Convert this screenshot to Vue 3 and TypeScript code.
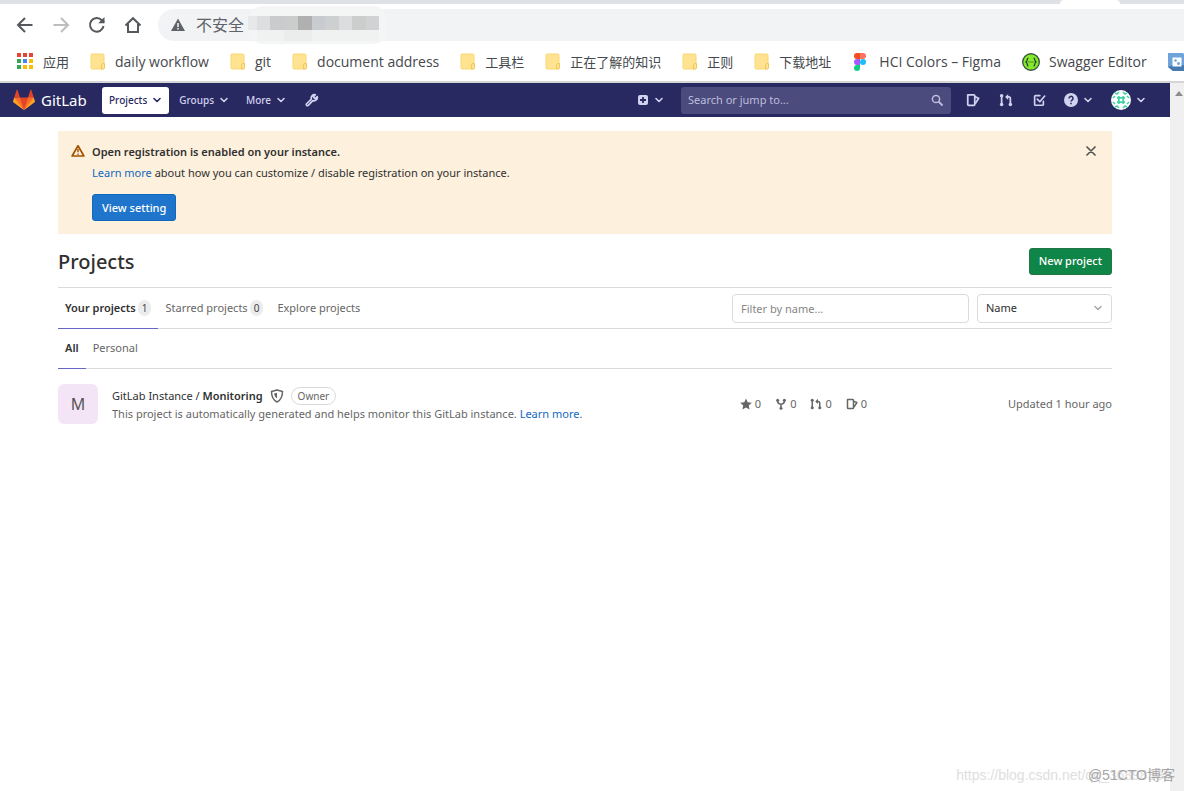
<script setup lang="ts">
import { ref } from 'vue'

interface Bookmark { label: string; icon: 'apps' | 'folder' | 'figma' | 'swagger' | 'tool'; cjk?: boolean }
interface Shade { x: number; w: number; fill: string }

const bookmarks: Bookmark[] = [
  { label: '应用', icon: 'apps', cjk: true },
  { label: 'daily workflow', icon: 'folder' },
  { label: 'git', icon: 'folder' },
  { label: 'document address', icon: 'folder' },
  { label: '工具栏', icon: 'folder', cjk: true },
  { label: '正在了解的知识', icon: 'folder', cjk: true },
  { label: '正则', icon: 'folder', cjk: true },
  { label: '下载地址', icon: 'folder', cjk: true },
  { label: 'HCI Colors – Figma', icon: 'figma' },
  { label: 'Swagger Editor', icon: 'swagger' },
  { label: '', icon: 'tool' },
]

const shades: Shade[] = [
  { x: 0, w: 9, fill: '#e6e8ea' }, { x: 9, w: 13, fill: '#dcdee0' },
  { x: 22, w: 14, fill: '#c9cbcd' }, { x: 36, w: 14, fill: '#cbcdcd' },
  { x: 50, w: 14, fill: '#b0b0b0' }, { x: 64, w: 13, fill: '#c8ccd1' },
  { x: 77, w: 14, fill: '#cdcfd1' }, { x: 91, w: 13, fill: '#dbdddf' },
  { x: 104, w: 14, fill: '#cccece' }, { x: 118, w: 13, fill: '#d0d2d4' },
]

const appColors = ['#ea4335', '#ea4335', '#ea4335', '#34a853', '#4285f4', '#fbbc05', '#34a853', '#fbbc05', '#fbbc05']
const filter = ref('')
const sort = ref('Name')
const showAlert = ref(true)
</script>

<template>
  <div class="window">
    <svg class="defs" aria-hidden="true">
      <symbol id="chev" viewBox="0 0 8 8"><path d="M1 2.500 4 5.500 7 2.500" fill="none" stroke="currentColor" stroke-width="1.600" stroke-linecap="round" stroke-linejoin="round" /></symbol>
      <symbol id="issues" viewBox="0 0 16 16"><g fill="none" stroke="currentColor" stroke-width="2" stroke-linejoin="round"><path d="M2 2h7a1 1 0 0 1 1 1v10a1 1 0 0 1-1 1H3a1 1 0 0 1-1-1z" /><path d="M10.500 4.500 14.500 6 11 11.500" stroke-linecap="round" /></g></symbol>
      <symbol id="merge" viewBox="0 0 16 16"><g fill="none" stroke="currentColor" stroke-width="2"><path d="M3 3v10M8.500 4.500h2.500a2 2 0 0 1 2 2V13" /></g><g fill="currentColor"><circle cx="3" cy="3" r="2" /><circle cx="3" cy="13" r="2" /><circle cx="13" cy="13" r="2" /><path d="M10.500 1v7L7 4.500z" /></g></symbol>
      <symbol id="fork" viewBox="0 0 16 16"><path d="M3.500 3v1.500c0 2 1.500 3 4.500 4 3-1 4.500-2 4.500-4V3M8 8.500V13" fill="none" stroke="currentColor" stroke-width="2" /><g fill="currentColor"><circle cx="3.500" cy="3" r="2" /><circle cx="12.500" cy="3" r="2" /><circle cx="8" cy="13.500" r="2" /></g></symbol>
    </svg>

    <div class="tabstrip"><span class="active-tab"></span></div>

    <div class="toolbar">
      <button class="nav-btn" aria-label="Back"><svg viewBox="0 0 18 18"><path d="M16.500 9H2.500M9 2 2 9l7 7" /></svg></button>
      <button class="nav-btn faded" aria-label="Forward"><svg viewBox="0 0 18 18"><path d="M1.500 9h14M9 2l7 7-7 7" /></svg></button>
      <button class="nav-btn" aria-label="Reload"><svg viewBox="0 0 18 18"><path d="M15.500 10A6.800 6.800 0 1 1 13.800 4.200L16 6.500" /><path d="M16.500 1v6.300h-6.300z" class="solid" /></svg></button>
      <button class="nav-btn" aria-label="Home"><svg viewBox="0 0 18 18"><path d="M1.500 9.500 9 2.200l7.500 7.300M4 8v8h10V8" /></svg></button>
      <div class="omnibox">
        <svg class="warn" viewBox="0 0 14 14"><path d="M7 0.500 14 13H0z" fill="#5f6368" /><path d="M7 5v4M7 10v1.600" stroke="#fff" stroke-width="1.400" /></svg>
        <span>不安全</span>
        <svg class="mosaic" viewBox="0 0 150 38">
          <rect x="2" y="0" width="136" height="38" rx="12" fill="#f4f5f5" />
          <rect v-for="s in shades" :key="s.x" :x="s.x" y="10" :width="s.w" height="14" :fill="s.fill" />
          <rect x="9" y="24" width="122" height="11" fill="#f0f1f1" />
          <rect x="36" y="24" width="28" height="11" fill="#ebecec" />
        </svg>
      </div>
    </div>

    <nav class="bookmarks" aria-label="Bookmarks">
      <a v-for="(b, i) in bookmarks" :key="i" href="#" :class="['bookmark', b.icon, { cjk: b.cjk }]" :aria-label="b.label || 'Bookmark'">
        <svg v-if="b.icon === 'apps'" viewBox="0 0 16 18"><rect v-for="(c, n) in appColors" :key="n" :x="(n % 3) * 6" :y="Math.floor(n / 3) * 6" width="4" height="4" :fill="c" /></svg>
        <svg v-else-if="b.icon === 'folder'" viewBox="0 0 16 18"><rect x="1" y="1" width="13" height="15" rx="1" fill="#ffe391" stroke="#f8d775" /><path d="M11.500 16v-4l1-1.500h2V15l-1 1z" fill="#ffe391" stroke="#efc75a" /></svg>
        <svg v-else-if="b.icon === 'figma'" viewBox="0 0 12 18"><path d="M3 0h3v6H3a3 3 0 0 1 0-6z" fill="#f24e1e" /><path d="M6 0h3a3 3 0 0 1 0 6H6z" fill="#ff7262" /><path d="M3 6h3v6H3a3 3 0 0 1 0-6z" fill="#a259ff" /><circle cx="9" cy="9" r="3" fill="#1abcfe" /><path d="M3 12h3v3a3 3 0 1 1-3-3z" fill="#0acf83" /></svg>
        <svg v-else-if="b.icon === 'swagger'" viewBox="0 0 18 18"><circle cx="9" cy="9" r="8.300" fill="#85ea2d" stroke="#3c5a3c" stroke-width="1.400" /><path d="M6.500 5C4.500 5 6 8 4 9 6 10 4.500 13 6.500 13M11.500 5C13.500 5 12 8 14 9 12 10 13.500 13 11.500 13" fill="none" stroke="#243b2c" stroke-width="1.200" /><path d="M6.500 9h1M8.500 9h1M10.500 9h1" stroke="#243b2c" stroke-width="1.200" /></svg>
        <svg v-else viewBox="0 0 18 18"><path d="M0 0h15l3 3v15H5l-5-4z" fill="#6fa4db" /><path d="M0 14 5 12h13v6H5z" fill="#457bb0" /><rect x="4.500" y="4.500" width="9" height="9" fill="#fff" /><circle cx="7.500" cy="7.500" r="1.300" fill="#6fa4db" /><circle cx="10.500" cy="10.500" r="1.500" fill="#6fa4db" /></svg>
        <span v-if="b.label">{{ b.label }}</span>
      </a>
    </nav>

    <div class="viewport">
      <div class="page">
        <header class="navbar">
          <a href="#" class="brand">
            <svg viewBox="0 0 36 36"><path fill="#e24329" d="M2 14l9.380 9v-9l-4-12.280c-.205-.632-1.176-.632-1.380 0zM34 14l-9.380 9v-9l4-12.280c.205-.632 1.176-.632 1.380 0zM18 34.380 3 14h30z" /><path fill="#fc6d26" d="M18 34.380 11.380 14H2l4 11zM18 34.380 24.620 14H34l-4 11z" /><path fill="#fca326" d="M2 14 .1 20.160c-.18.565 0 1.200.5 1.560l17.420 12.660zM34 14l1.900 6.160c.18.565 0 1.200-.5 1.560L18 34.380z" /></svg>
            <span>GitLab</span>
          </a>
          <button class="menu current">Projects <svg class="chev"><use href="#chev" /></svg></button>
          <button class="menu">Groups <svg class="chev"><use href="#chev" /></svg></button>
          <button class="menu">More <svg class="chev"><use href="#chev" /></svg></button>
          <a href="#" class="wrench" aria-label="Admin Area"><svg viewBox="0 0 16 16"><path d="M14 4.200 11.600 6.500 9.500 4.400 11.800 2A3.800 3.800 0 0 0 7.300 7L1.800 12.300a1.350 1.350 0 0 0 1.900 1.900L9 8.700A3.800 3.800 0 0 0 14 4.200z" fill="none" stroke="currentColor" stroke-width="1.900" stroke-linejoin="round" /></svg></a>
          <div class="right">
            <button class="icon-menu plus" aria-label="New"><svg class="i12" viewBox="0 0 12 12"><rect x="1" y="1" width="10" height="10" rx="2" fill="currentColor" /><path d="M6 3v6M3 6h6" stroke="#292961" stroke-width="1.800" /></svg><svg class="chev"><use href="#chev" /></svg></button>
            <label class="search"><input type="text" placeholder="Search or jump to..." aria-label="Search or jump to" /><svg class="i12" viewBox="0 0 12 12"><circle cx="5" cy="5" r="3.600" fill="none" stroke="currentColor" stroke-width="1.500" /><path d="m8 8 3 3" stroke="currentColor" stroke-width="1.800" stroke-linecap="round" /></svg></label>
            <a href="#" class="tool" aria-label="Issues"><svg class="i14"><use href="#issues" /></svg></a>
            <a href="#" class="tool" aria-label="Merge requests"><svg class="i14"><use href="#merge" /></svg></a>
            <a href="#" class="tool" aria-label="To-Do List"><svg class="i14" viewBox="0 0 16 16"><path d="M9 3H4a1 1 0 0 0-1 1v9a1 1 0 0 0 1 1h8a1 1 0 0 0 1-1V9.500M6 7l3 3 5.500-6.500" fill="none" stroke="currentColor" stroke-width="1.900" stroke-linecap="round" stroke-linejoin="round" /></svg></a>
            <button class="icon-menu help" aria-label="Help"><svg class="i14" viewBox="0 0 14 14"><circle cx="7" cy="7" r="7" fill="currentColor" /><path d="M5 5.400a2 2 0 1 1 3 1.700c-.7.400-1 .7-1 1.500M7 9.800v1.400" fill="none" stroke="#292961" stroke-width="1.500" /></svg><svg class="chev"><use href="#chev" /></svg></button>
            <button class="icon-menu" aria-label="Account"><svg class="avatar" viewBox="0 0 20 20"><circle cx="10" cy="10" r="10" fill="#fff" /><g fill="none" stroke="#3fd6a1"><path stroke-width="1.800" d="M7.800 6v8M12.200 6v8M6 7.800h8M6 12.200h8" /><path stroke-width="1.600" d="M8 2 6 4 4 3M12 2l2 2 2-1M8 18l-2-2-2 1M12 18l2-2 2 1M2 8l2-2M2 12l2 2M18 8l-2-2M18 12l-2 2" /></g></svg><svg class="chev"><use href="#chev" /></svg></button>
          </div>
        </header>

        <main>
          <section v-if="showAlert" class="alert">
            <svg class="i14" viewBox="0 0 14 14"><path d="M7 1.800 12.900 12H1.100z" fill="none" stroke="#a35200" stroke-width="1.700" stroke-linejoin="round" /><path d="M7 5v3.300M7 9.400v1.400" stroke="#a35200" stroke-width="1.500" /></svg>
            <div class="alert-body">
              <h4>Open registration is enabled on your instance.</h4>
              <p><a href="#">Learn more</a> about how you can customize / disable registration on your instance.</p>
              <button class="btn blue">View setting</button>
            </div>
            <button class="close" aria-label="Dismiss" @click="showAlert = false"><svg viewBox="0 0 10 10"><path d="m1 1 8 8M9 1 1 9" stroke="currentColor" stroke-width="1.700" stroke-linecap="round" /></svg></button>
          </section>

          <div class="title-row"><h1>Projects</h1><button class="btn green">New project</button></div>

          <div class="tabs">
            <a href="#" class="tab active">Your projects <span class="badge">1</span></a>
            <a href="#" class="tab">Starred projects <span class="badge">0</span></a>
            <a href="#" class="tab">Explore projects</a>
            <div class="filters">
              <input v-model="filter" type="text" placeholder="Filter by name..." aria-label="Filter by name" />
              <div class="select-wrap"><select v-model="sort" aria-label="Sort by"><option>Name</option></select><svg class="chev"><use href="#chev" /></svg></div>
            </div>
          </div>
          <div class="tabs sub">
            <a href="#" class="tab active">All</a>
            <a href="#" class="tab">Personal</a>
          </div>

          <article class="project">
            <div class="letter">M</div>
            <div class="info">
              <div class="name-row">
                <a href="#" class="name">GitLab Instance / <b>Monitoring</b></a>
                <svg class="i14" viewBox="0 0 14 14"><path d="M7 1 12.500 2.500C12.500 8 11 11 7 13 3 11 1.500 8 1.500 2.500z" fill="none" stroke="currentColor" stroke-width="1.500" stroke-linejoin="round" /><path d="M7 3.800v5.600C5 8 4.300 6.500 4.200 4.500z" fill="currentColor" /></svg>
                <span class="role">Owner</span>
              </div>
              <p>This project is automatically generated and helps monitor this GitLab instance. <a href="#">Learn more</a>.</p>
            </div>
            <div class="stats">
              <a href="#"><svg class="i12" viewBox="0 0 14 14"><path d="M7 .5 9 5l4.800.5-3.600 3.200 1 4.800L7 11l-4.200 2.500 1-4.800L.2 5.500 5 5z" fill="currentColor" /></svg>0</a>
              <a href="#"><svg class="i12"><use href="#fork" /></svg>0</a>
              <a href="#"><svg class="i12"><use href="#merge" /></svg>0</a>
              <a href="#"><svg class="i12"><use href="#issues" /></svg>0</a>
            </div>
            <div class="updated">Updated 1 hour ago</div>
          </article>
        </main>
      </div>
      <div class="scrollbar"><svg viewBox="0 0 8 5"><path d="M0 5 4 0l4 5z" fill="#8c8c8c" /></svg></div>
    </div>

    <div class="watermark url">https://blog.csdn.net/qq_36898339</div>
    <div class="watermark site">@51CTO博客</div>
  </div>
</template>

<style>
body { margin: 0; background: #fff; }
</style>

<style scoped>
* { box-sizing: border-box; }
.window { position: relative; min-height: 100vh; display: flex; flex-direction: column; overflow: hidden; background: #fff; color: #303030; font: 11px/18px "Noto Sans", "Noto Sans CJK SC", sans-serif; }
.defs { position: absolute; width: 0; height: 0; }
button, input, select { font: inherit; color: inherit; border: 0; background: none; padding: 0; margin: 0; }
a { color: #1068bf; text-decoration: none; }
h1, h4, p { margin: 0; }
svg { display: block; flex: none; }
.chev { width: 8px; height: 8px; }
.i12 { width: 12px; height: 12px; }
.i14 { width: 14px; height: 14px; }

.tabstrip { height: 4px; background: #dee1e6; display: flex; justify-content: flex-end; padding-right: 64px; }
.active-tab { width: 60px; background: #fff; border-radius: 4px 4px 0 0; }
.toolbar { display: flex; align-items: center; height: 42px; padding-left: 16px; }
.nav-btn { width: 18px; height: 18px; margin-right: 18px; color: #55585c; }
.nav-btn svg { width: 18px; height: 18px; fill: none; stroke: currentColor; stroke-width: 2; }
.nav-btn .solid { fill: currentColor; stroke: none; }
.nav-btn.faded { color: #bbbdbf; }
.omnibox { flex: 1; display: flex; align-items: center; height: 32px; margin: 0 -20px 0 -2px; padding-left: 13px; background: #f1f3f4; border-radius: 16px 0 0 16px; color: #5f6368; font-size: 16px; }
.warn { width: 14px; height: 14px; margin-right: 11px; }
.mosaic { width: 150px; height: 38px; margin-left: 4px; }
.bookmarks { display: flex; align-items: center; gap: 21px; height: 37px; padding: 0 0 4px 17px; border-bottom: 2px solid #d5d5d8; overflow: hidden; font: 14px/20px "Open Sans", "Noto Sans CJK SC", sans-serif; }
.bookmark { display: flex; align-items: center; flex: none; gap: 9px; color: #45484c; white-space: nowrap; }
.bookmark.cjk { font-size: 13px; }
.bookmark svg { width: 16px; height: 18px; }
.bookmark.apps { gap: 10px; }
.bookmark.figma { gap: 13px; }
.bookmark.figma svg { width: 12px; margin-left: 2px; }
.bookmark.swagger svg, .bookmark.tool svg { width: 18px; }

.viewport { flex: 1; display: flex; }
.page { flex: 1; min-width: 0; }
.scrollbar { width: 14px; background: #f0f0f0; padding: 8px 3px 0 5px; }
.scrollbar svg { width: 8px; height: 5px; }
.navbar { display: flex; align-items: center; height: 34px; padding: 0 25px 0 13px; background: #292961; color: #d1d1f0; }
.brand { display: flex; align-items: center; gap: 6px; width: 89px; color: #fff; font-size: 15px; }
.brand svg { width: 22px; height: 22px; }
.menu { display: flex; align-items: center; gap: 6px; height: 27px; padding: 0 8px 0 7px; font-size: 10px; font-weight: 500; border-radius: 3px; }
.menu + .menu { margin-left: 3px; }
.current { background: #fff; color: #292961; }
.wrench { margin-left: 12px; color: #d1d1f0; }
.wrench svg { width: 14px; height: 14px; }
.right { display: flex; align-items: center; margin-left: auto; }
.icon-menu { display: flex; align-items: center; gap: 6px; }
.plus { margin-right: 18px; }
.search { display: flex; align-items: center; width: 270px; height: 27px; padding: 0 8px 0 7px; margin-right: 15px; border-radius: 3px; background: #4b4b7d; color: #bdbddc; }
.search input { flex: 1; min-width: 0; outline: none; }
.search input::placeholder { color: #bdbddc; opacity: 1; }
.tool { color: #d1d1f0; margin-right: 19px; }
.help { margin: 0 19px 0 -1px; }
.avatar { width: 20px; height: 20px; }

main { padding: 14px 58px 0; }
.alert { display: flex; align-items: flex-start; padding: 13px 14px 13px 13px; background: #fdf1dd; }
.alert > .i14 { margin: 0 7px 0 0; }
.alert-body { flex: 1; }
.alert h4 { font-size: 11px; line-height: 16px; font-weight: 600; }
.alert p { margin: 4px 0 12px; }
.btn { height: 27px; padding: 0 9px; border-radius: 3px; color: #fff; font-weight: 500; }
.blue { background: #1f75cb; border: 1px solid #1068bf; }
.green { background: #108548; border: 1px solid #217645; }
.close { width: 12px; height: 14px; color: #555; }
.close svg { width: 10px; height: 10px; }
.title-row { display: flex; align-items: center; justify-content: space-between; height: 54px; padding-top: 1px; border-bottom: 1px solid #dbdbdb; }
h1 { padding-top: 2px; font-size: 20px; line-height: 28px; font-weight: 500; }
.tabs { display: flex; height: 41px; border-bottom: 1px solid #dbdbdb; }
.sub { height: 40px; }
.tab { display: flex; align-items: center; gap: 2px; height: 40px; padding: 0 7px; color: #666; }
.sub .tab { height: 39px; padding-bottom: 2px; }
.tab.active { color: #303030; font-weight: 600; box-shadow: 0 1px #6666c4; }
.badge { padding: 0 4px; border-radius: 8px; background: #ececef; font-size: 10px; line-height: 16px; font-weight: 400; color: #444; }
.filters { display: flex; align-items: center; gap: 8px; margin-left: auto; }
.filters input, .filters select { height: 29px; padding: 0 8px; border: 1px solid #dbdbdb; border-radius: 4px; background: #fff; }
.filters input { width: 237px; }
.filters input::placeholder { color: #868686; opacity: 1; }
.select-wrap { position: relative; }
.filters select { width: 135px; appearance: none; }
.select-wrap .chev { position: absolute; right: 10px; top: 10px; color: #aaa; pointer-events: none; }
.project { display: flex; align-items: center; padding-top: 15px; color: #666; }
.letter { width: 40px; height: 40px; margin-right: 14px; border-radius: 6px; background: #f4e5f6; color: #555; font-size: 16px; line-height: 40px; text-align: center; }
.info { flex: 1; padding-top: 1px; }
.name-row { display: flex; align-items: center; gap: 7px; height: 18px; }
.name { color: #303030; }
.name b { font-weight: 600; }
.role { padding: 0 6px; border: 1px solid #dbdbdb; border-radius: 9px; font-size: 10px; line-height: 16px; }
.stats { display: flex; gap: 14px; margin-right: 141px; }
.stats a { display: flex; align-items: center; gap: 3px; color: #666; }
.watermark { position: absolute; bottom: 6px; white-space: nowrap; font: 14px/20px "Liberation Sans", "Noto Sans CJK SC", sans-serif; }
.url { right: 13px; color: #dedede; }
.site { right: 9px; color: #a5a5a5; }
</style>
